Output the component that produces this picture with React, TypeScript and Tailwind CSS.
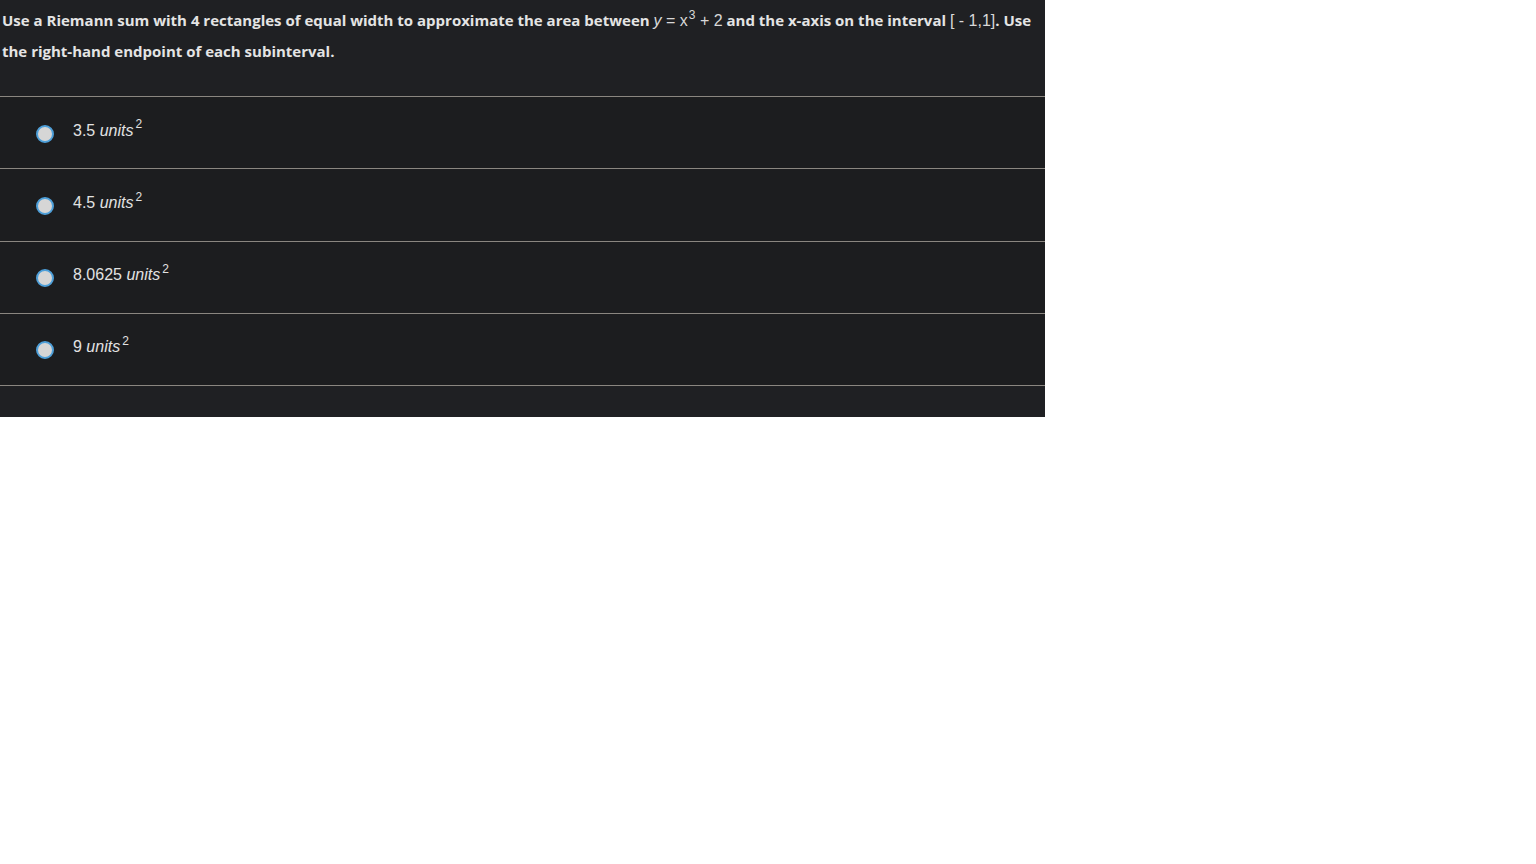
import React from "react";

const options = ["3.5", "4.5", "8.0625", "9"];

export default function App() {
  return (
    <div className="w-[1045px] bg-[#1f2023]" style={{ fontFamily: "'Open Sans', Lato, sans-serif" }}>
      <div className="h-[96px] pl-[2px] pt-[5px] text-[15px] font-bold leading-[31px] text-[#e4e4e4]">
        <div className="whitespace-nowrap">
          Use a Riemann sum with 4 rectangles of equal width to approximate the area between{" "}
          <span className="text-[16px] font-normal text-[#d8d8d8]" style={{ fontFamily: "'Liberation Sans', sans-serif" }}>
            <i>y</i> = x<sup className="ml-[1px] top-[-0.6em] text-[12px]">3</sup> + 2
          </span>{" "}
          and the x-axis on the interval{" "}
          <span className="text-[16px] font-normal text-[#d8d8d8]" style={{ fontFamily: "'Liberation Sans', sans-serif" }}>
            [ - 1,1]
          </span>
          . Use
        </div>
        <div className="whitespace-nowrap">the right-hand endpoint of each subinterval.</div>
      </div>
      {options.map((o) => (
        <div key={o} className="flex h-[72.25px] items-center border-t border-[#8a8680] bg-[#1c1d1f] pl-[36px]">
          <span className="mt-[2px] h-[18px] w-[18px] rounded-full border-[2.5px] border-[#4d9fd9] bg-[#d6d6d6]" />
          <span
            className="ml-[19px] mt-[-4px] text-[16px] font-light text-[#e2e2e2]"
            style={{ fontFamily: "'Liberation Sans', Arial, sans-serif" }}
          >
            {o} <i>units</i>
            <sup className="ml-[2px] top-[-0.6em] text-[12px]">2</sup>
          </span>
        </div>
      ))}
      <div className="h-[32px] border-t border-[#8a8680] bg-[#1f2023]" />
    </div>
  );
}
